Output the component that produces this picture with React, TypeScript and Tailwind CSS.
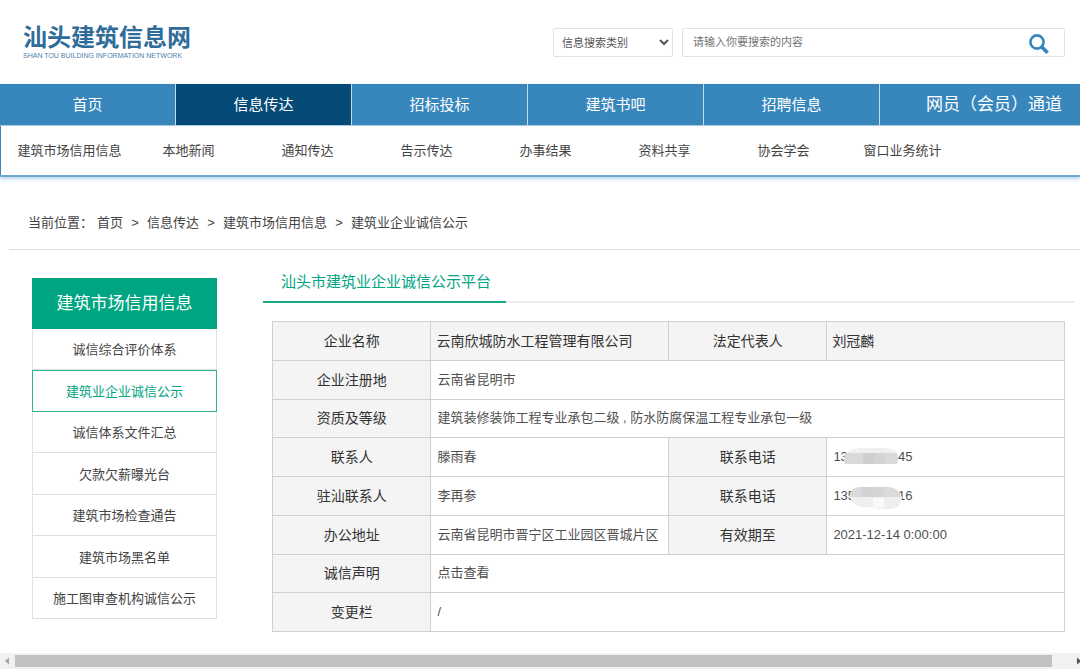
import React from "react";

const NAV = ["首页", "信息传达", "招标投标", "建筑书吧", "招聘信息"];

const SUB_NAV = [
  "建筑市场信用信息",
  "本地新闻",
  "通知传达",
  "告示传达",
  "办事结果",
  "资料共享",
  "协会学会",
  "窗口业务统计",
];

const CRUMBS = ["首页", "信息传达", "建筑市场信用信息", "建筑业企业诚信公示"];

const SIDE_MENU = [
  "诚信综合评价体系",
  "建筑业企业诚信公示",
  "诚信体系文件汇总",
  "欠款欠薪曝光台",
  "建筑市场检查通告",
  "建筑市场黑名单",
  "施工图审查机构诚信公示",
];

function Header() {
  return (
    <header className="flex h-[84px] items-start justify-between pr-[15px] pl-[23px]">
      <a href="#" className="pt-6 text-[#2f6c99]">
        <div className="text-2xl leading-[28px] font-bold">汕头建筑信息网</div>
        <div className="text-[7px] leading-2 text-[#4d83ab]">SHAN TOU BUILDING INFORMATION NETWORK</div>
      </a>
      <form className="flex gap-[9px] pt-7 text-[11px] text-[#555]" onSubmit={(e) => e.preventDefault()}>
        <select
          aria-label="信息搜索类别"
          className="h-[29px] w-[120px] rounded-xs border border-[#e2e2e2] bg-white pl-1"
        >
          <option>信息搜索类别</option>
        </select>
        <div className="flex h-[29px] w-[383px] items-center rounded-xs border border-[#e2e2e2] pr-[15px]">
          <input
            type="text"
            aria-label="搜索内容"
            placeholder="请输入你要搜索的内容"
            className="min-w-0 flex-1 pl-[10px] outline-none placeholder:text-[#757575]"
          />
          <button type="submit" aria-label="搜索" className="pt-[2px]">
            <svg width="20" height="20" viewBox="0 0 20 20" fill="none" stroke="#3585bc">
              <circle cx="8" cy="8" r="6.6" strokeWidth="2.6" />
              <path d="M12.6 12.8 L18.6 18.8" strokeWidth="3.6" />
            </svg>
          </button>
        </div>
      </form>
    </header>
  );
}

function Nav() {
  return (
    <nav className="border-b-2 border-[#6fa8d0] shadow-[0_2px_4px_rgba(53,133,188,0.35)]">
      <div className="flex h-[42px] overflow-hidden border-b border-[#a9cbe2] bg-[#3787bd] text-[15px] text-white">
        {NAV.map((item) => (
          <a
            key={item}
            href="#"
            className={
              "flex w-[176px] shrink-0 items-center justify-center border-r border-[#c3dbeb] pt-px " +
              (item === "信息传达" ? "bg-[#064b78]" : "")
            }
          >
            {item}
          </a>
        ))}
        <a href="#" className="flex flex-1 items-center justify-end pr-[18px] text-[17px] whitespace-nowrap">
          网员（会员）通道
        </a>
      </div>
      <div className="flex h-[49px] items-center border-l border-[#3787bd] pl-[9px] text-[13px]">
        {SUB_NAV.map((item) => (
          <a key={item} href="#" className="w-[119px] shrink-0 text-center">
            {item}
          </a>
        ))}
      </div>
    </nav>
  );
}

function Breadcrumb() {
  return (
    <div className="ml-[9px] flex h-[73px] items-center border-b border-[#e0e0e0] pt-5 pl-[19px] text-[13px]">
      <span className="mr-1">当前位置：</span>
      {CRUMBS.map((item, i) => (
        <React.Fragment key={item}>
          {i > 0 && <span className="w-6 text-center">&gt;</span>}
          <a href="#">{item}</a>
        </React.Fragment>
      ))}
    </div>
  );
}

function Sidebar() {
  return (
    <aside className="w-[185px] shrink-0 pt-7 text-center">
      <h2 className="bg-[#00a582] text-[17px] leading-[51px] text-white">建筑市场信用信息</h2>
      <ul className="grid h-[290px] auto-rows-fr text-[13px]">
        {SIDE_MENU.map((item) => (
          <li key={item} className="flex">
            <a
              href="#"
              className={
                "flex flex-1 items-center justify-center border pt-px " +
                (item === "建筑业企业诚信公示"
                  ? "border-[#2fb394] text-[#00a582]"
                  : "border-[#e0e0e0] border-t-transparent")
              }
            >
              {item}
            </a>
          </li>
        ))}
      </ul>
    </aside>
  );
}

const TH = "border border-[#d0d0d0] bg-[#f4f4f4] text-center text-sm font-normal text-[#333]";
const TD = "border border-[#d0d0d0] pl-[6px] text-[#505050]";
const TD_HEAD = "border border-[#d0d0d0] bg-[#f4f4f4] pl-[5px] text-sm text-[#333]";

function PhoneA() {
  return (
    <span className="relative flex w-[79px] justify-between">
      <span>13</span>
      <span>45</span>
      <svg className="absolute -top-px left-[10px]" width="56" height="22" viewBox="0 0 56 22">
        <path d="M2 10 C6 3 12 2 20 2 H42 C50 2 54 5 55 10 L55 14 H1 Z" fill="#f0f0f0" />
        <path d="M3 7 H54 Q56 13 54 18 H2 Q-1 13 3 7 Z" fill="#d9d9d9" />
        <path d="M20 7 h11 v11 h-11 z" fill="#cfcdcd" />
        <path d="M31 7 h11 v11 h-11 z" fill="#d5d4d4" />
      </svg>
    </span>
  );
}

function PhoneB() {
  return (
    <span className="relative flex w-[79px] justify-between">
      <span>135</span>
      <span>16</span>
      <svg className="absolute -top-[2px] left-4" width="54" height="26" viewBox="0 0 54 26">
        <path d="M1 12 H53 Q53 24 42 25 Q28 26 22 23 H12 Q2 21 1 12 Z" fill="#efefef" />
        <path d="M24 14 h11 v10 h-11 z" fill="#fafafa" />
        <path d="M0 13 Q2 3 10 3 H40 Q50 4 52 13 Z" fill="#dadada" />
        <path d="M13 3 h11 v10 h-11 z" fill="#d3d1d1" />
        <path d="M24 3 h11 v10 h-11 z" fill="#d7d4d4" />
      </svg>
    </span>
  );
}

function InfoTable() {
  return (
    <table className="h-[311px] w-full table-fixed border-collapse text-[13px] leading-5">
      <colgroup>
        <col className="w-1/5" />
        <col className="w-[30%]" />
        <col className="w-1/5" />
        <col className="w-[30%]" />
      </colgroup>
      <tbody>
        <tr>
          <th scope="row" className={TH}>企业名称</th>
          <td className={TD_HEAD}>云南欣城防水工程管理有限公司</td>
          <th scope="row" className={TH}>法定代表人</th>
          <td className={TD_HEAD}>刘冠麟</td>
        </tr>
        <tr>
          <th scope="row" className={TH}>企业注册地</th>
          <td className={TD} colSpan={3}>云南省昆明市</td>
        </tr>
        <tr>
          <th scope="row" className={TH}>资质及等级</th>
          <td className={TD} colSpan={3}>建筑装修装饰工程专业承包二级 , 防水防腐保温工程专业承包一级</td>
        </tr>
        <tr>
          <th scope="row" className={TH}>联系人</th>
          <td className={TD}>滕雨春</td>
          <th scope="row" className={TH}>联系电话</th>
          <td className={TD}><PhoneA /></td>
        </tr>
        <tr>
          <th scope="row" className={TH}>驻汕联系人</th>
          <td className={TD}>李再参</td>
          <th scope="row" className={TH}>联系电话</th>
          <td className={TD}><PhoneB /></td>
        </tr>
        <tr>
          <th scope="row" className={TH}>办公地址</th>
          <td className={TD}>云南省昆明市晋宁区工业园区晋城片区</td>
          <th scope="row" className={TH}>有效期至</th>
          <td className={TD}>2021-12-14 0:00:00</td>
        </tr>
        <tr>
          <th scope="row" className={TH}>诚信声明</th>
          <td className={TD} colSpan={3}><a href="#">点击查看</a></td>
        </tr>
        <tr>
          <th scope="row" className={TH}>变更栏</th>
          <td className={TD} colSpan={3}>/</td>
        </tr>
      </tbody>
    </table>
  );
}

function ScrollBar() {
  return (
    <div className="mt-auto flex h-4 items-center bg-[#f1f1f1]" aria-hidden>
      <svg className="w-[15px] shrink-0" height="8" viewBox="0 0 15 8">
        <path d="M9 0.5 V7.5 L5 4 Z" fill="#a3a3a3" />
      </svg>
      <div className="h-3 flex-1 bg-[#c1c1c1]" />
      <svg className="w-7 shrink-0" height="8" viewBox="0 0 28 8">
        <path d="M25 0.5 V7.5 L29 4 Z" fill="#505050" />
      </svg>
    </div>
  );
}

export default function App() {
  return (
    <div className="flex min-h-screen flex-col overflow-hidden bg-white font-['Liberation_Sans','Noto_Sans_CJK_SC',sans-serif] text-[#444]">
      <Header />
      <Nav />
      <Breadcrumb />
      <main className="flex gap-[46px] pr-[6px] pb-5 pl-8">
        <Sidebar />
        <section className="min-w-0 flex-1">
          <div className="flex h-[53px] items-end border-b-2 border-[#ececec]">
            <h1 className="-mb-[2px] w-[243px] border-b-2 border-[#17a886] pb-[7px] pl-[18px] text-[15px] leading-6 whitespace-nowrap text-[#00a582]">
              汕头市建筑业企业诚信公示平台
            </h1>
          </div>
          <div className="pt-[18px] pr-[9px] pl-[9px]">
            <InfoTable />
          </div>
        </section>
      </main>
      <ScrollBar />
    </div>
  );
}
